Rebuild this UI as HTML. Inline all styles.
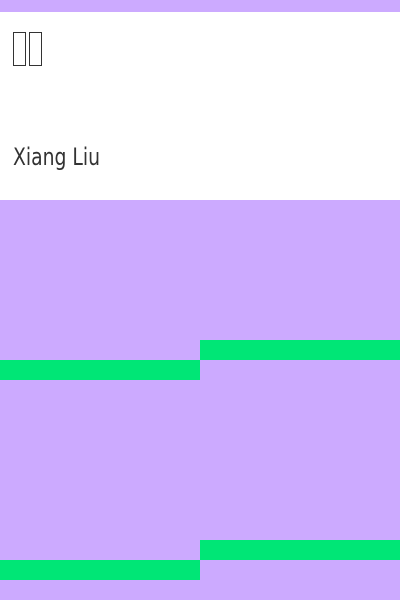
<!DOCTYPE html>
<html><head><style>
html,body{margin:0;padding:0;width:400px;height:600px;background:#ccaaff;overflow:hidden;position:relative;font-family:"DejaVu Sans Condensed","DejaVu Sans",sans-serif}
.w{position:absolute;left:0;top:12px;width:400px;height:188px;background:#fff}
.b{position:absolute;top:32px;width:11px;height:32px;border:1.5px solid #333}
.t{position:absolute;left:13px;top:143px;font-size:24px;color:#333;transform:scaleX(0.87);transform-origin:0 0;white-space:nowrap}
.g{position:absolute;height:20px;width:200px;background:#00e676}
</style></head><body>
<div class="w"></div>
<div class="b" style="left:13px"></div>
<div class="b" style="left:29px"></div>
<div class="t">Xiang Liu</div>
<div class="g" style="left:200px;top:340px"></div>
<div class="g" style="left:0;top:360px"></div>
<div class="g" style="left:200px;top:540px"></div>
<div class="g" style="left:0;top:560px"></div>
</body></html>
